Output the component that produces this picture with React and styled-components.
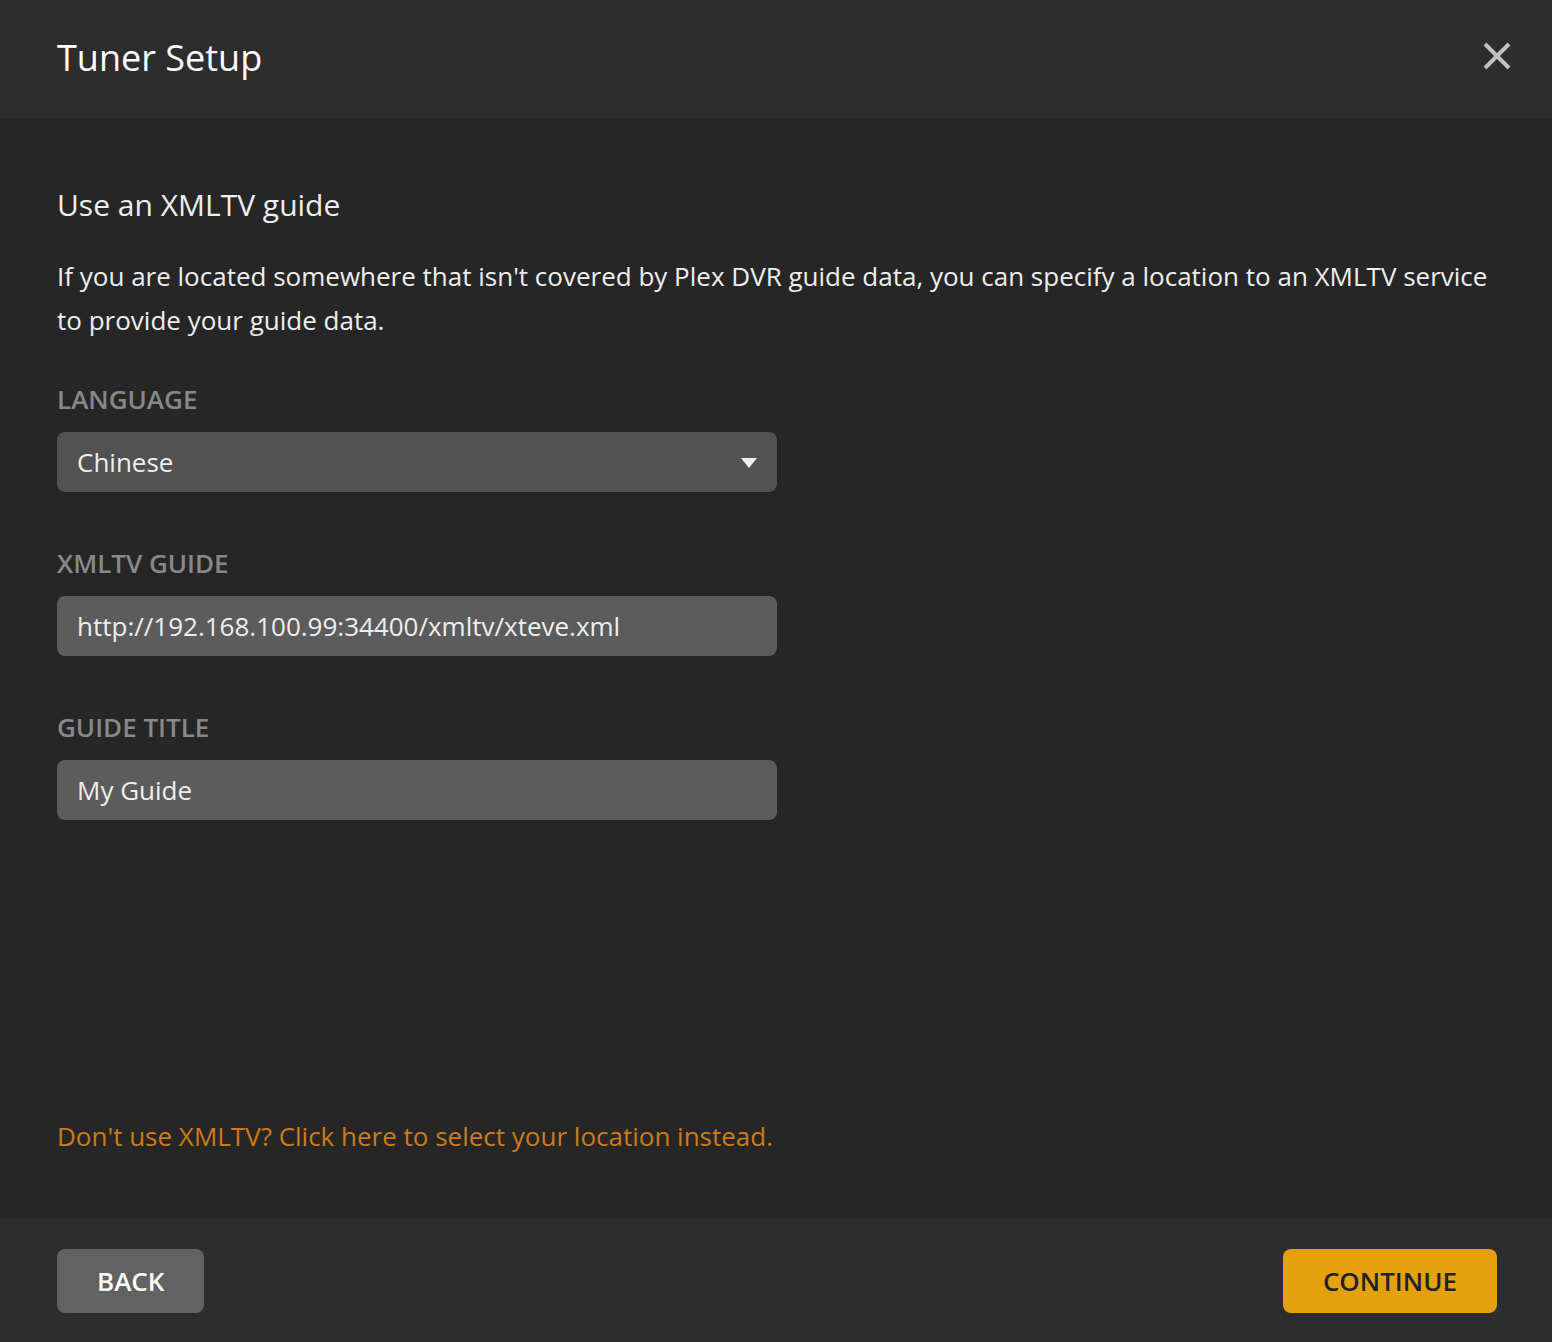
import React, { useState } from 'react';
import styled, { createGlobalStyle } from 'styled-components';

const GlobalStyle = createGlobalStyle`
  * {
    box-sizing: border-box;
  }
  body {
    margin: 0;
    background: #262626;
    color: #eee;
    font-family: "Open Sans", sans-serif;
    font-size: 26px;
    line-height: 44px;
  }
`

const Modal = styled.div`
  display: flex;
  flex-direction: column;
  min-height: 100vh;
`

const Header = styled.header`
  display: flex;
  align-items: flex-start;
  justify-content: space-between;
  padding: 30px 40px 33px 57px;
  background: #2d2d2d;
`

const Title = styled.h1`
  margin: 0;
  color: #fff;
  font-size: 36px;
  font-weight: 400;
  line-height: 56px;
`

const CloseButton = styled.button`
  display: flex;
  padding: 11px 0;
  border: none;
  background: none;
  color: #c0c0c0;
  cursor: pointer;
`

const Body = styled.form`
  display: flex;
  flex: 1;
  flex-direction: column;
  padding: 64px 57px 61px;
`

const Heading = styled.h2`
  margin: 0 0 27px;
  font-size: 30px;
  font-weight: 400;
  line-height: 44px;
`

const Text = styled.p`
  margin: 0 0 39px;
`

const Field = styled.div`
  display: flex;
  flex-direction: column;
  gap: 15px;
  max-width: 720px;
  margin-bottom: 53px;
`

const Label = styled.label`
  color: #888;
  font-weight: 600;
  line-height: 36px;
  text-transform: uppercase;
`

const Input = styled.input`
  width: 100%;
  height: 60px;
  padding: 0 20px;
  border: none;
  border-radius: 8px;
  background: #5c5c5c;
  color: #eee;
  font: inherit;
`

const SelectWrap = styled.div`
  position: relative;

  svg {
    position: absolute;
    top: 26px;
    right: 20px;
    pointer-events: none;
  }
`

const Select = styled(Input).attrs({ as: 'select' })`
  display: block;
  appearance: none;
  background: #525252;
`

const Link = styled.a`
  align-self: flex-start;
  margin-top: auto;
  color: #cc7b19;
  text-decoration: none;
`

const Footer = styled.footer`
  display: flex;
  justify-content: space-between;
  padding: 30px 55px 29px 57px;
  background: #2d2d2d;
`

const Button = styled.button`
  height: 64px;
  padding: 0 40px;
  border: none;
  border-radius: 8px;
  background: ${props => props.$primary ? '#e5a00d' : '#626262'};
  color: ${props => props.$primary ? '#1f2326' : '#fff'};
  font: inherit;
  font-weight: 600;
  text-transform: uppercase;
  cursor: pointer;
`

const App = () => {
  const [language, setLanguage] = useState('Chinese');
  const [guide, setGuide] = useState('http://192.168.100.99:34400/xmltv/xteve.xml');
  const [title, setTitle] = useState('My Guide');

  return (
    <Modal>
      <GlobalStyle />
      <Header>
        <Title>Tuner Setup</Title>
        <CloseButton type="button" aria-label="Close">
          <svg width="30" height="30" viewBox="0 0 30 30" fill="none" stroke="currentColor" strokeWidth="4">
            <path d="M3 3L27 27M27 3L3 27" />
          </svg>
        </CloseButton>
      </Header>

      <Body id="tuner" onSubmit={e => e.preventDefault()}>
        <Heading>Use an XMLTV guide</Heading>
        <Text>
          If you are located somewhere that isn't covered by Plex DVR guide data, you can specify a location to an XMLTV service to provide your guide data.
        </Text>
        <Field>
          <Label htmlFor="language">Language</Label>
          <SelectWrap>
            <Select id="language" value={language} onChange={e => setLanguage(e.target.value)}>
              <option>Chinese</option>
              <option>English</option>
            </Select>
            <svg width="16" height="10" viewBox="0 0 16 10" fill="#eee">
              <path d="M0 0H16L8 10Z" />
            </svg>
          </SelectWrap>
        </Field>
        <Field>
          <Label htmlFor="guide">XMLTV Guide</Label>
          <Input type="text" id="guide" value={guide} onChange={e => setGuide(e.target.value)} />
        </Field>
        <Field>
          <Label htmlFor="title">Guide Title</Label>
          <Input type="text" id="title" value={title} onChange={e => setTitle(e.target.value)} />
        </Field>
        <Link href="#location">Don't use XMLTV? Click here to select your location instead.</Link>
      </Body>

      <Footer>
        <Button type="button">Back</Button>
        <Button type="submit" form="tuner" $primary>Continue</Button>
      </Footer>
    </Modal>
  )
}

export default App;
